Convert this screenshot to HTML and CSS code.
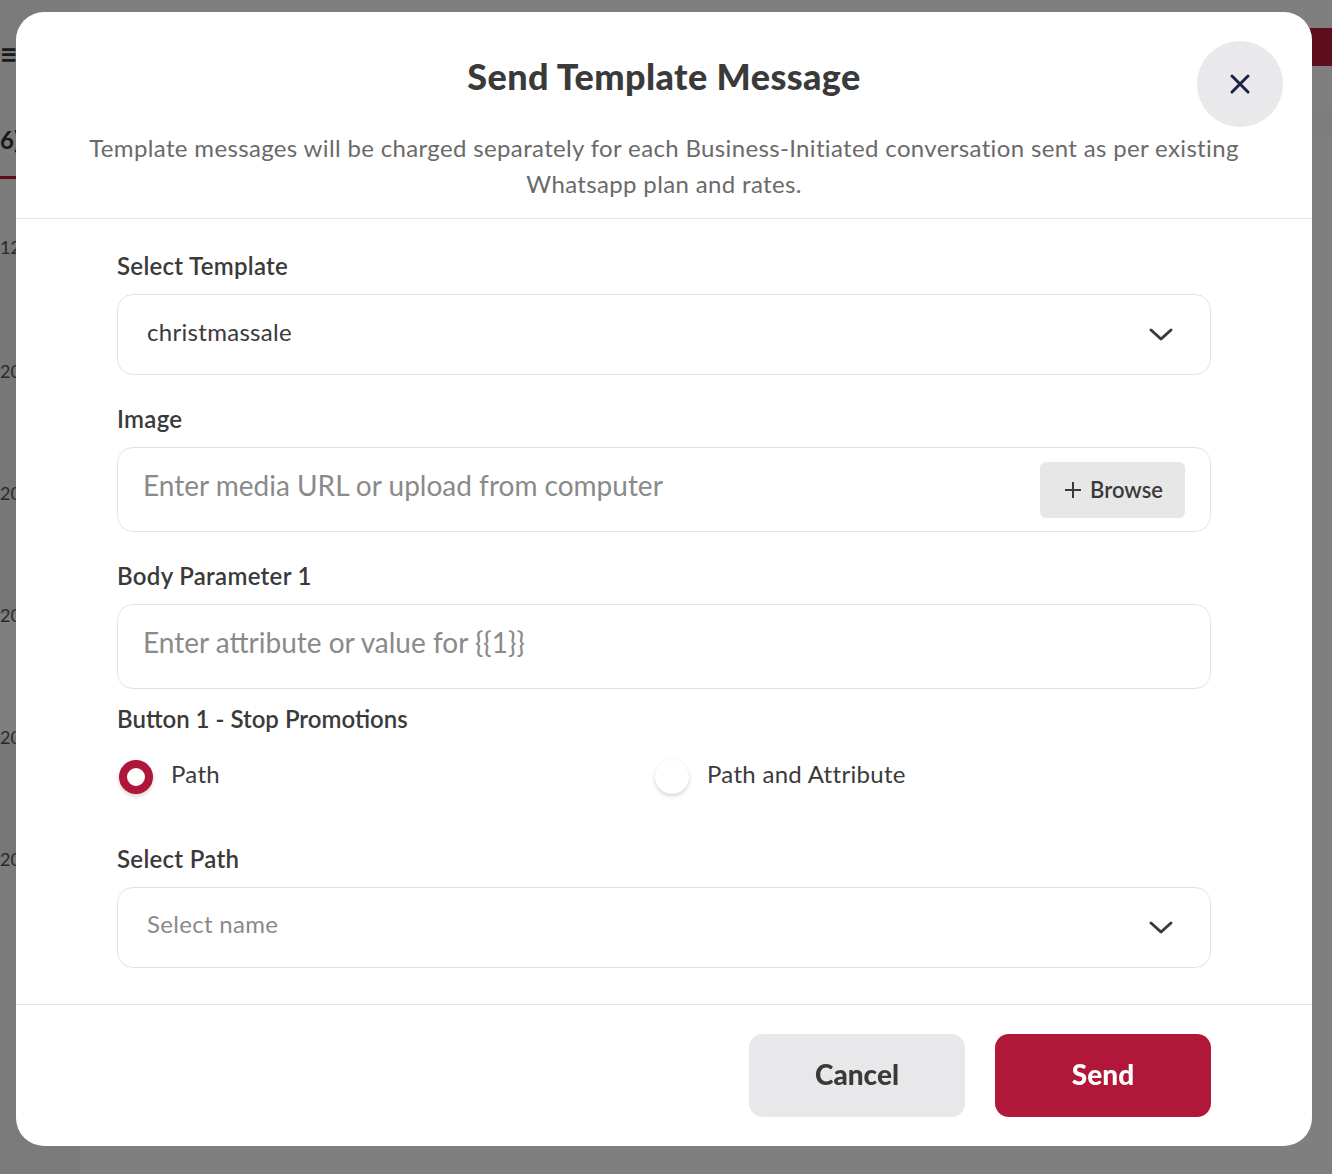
FILE: index.html
```html
<!DOCTYPE html>
<html lang="en">
<head>
  <meta charset="UTF-8">
  <title>Send Template Message</title>
  <link rel="stylesheet" href="styles.css">
</head>
<body>
  <div class="page">
    <div class="side">
      <div class="side-icon">&#8801;</div>
      <div class="side-count">6)</div>
      <div class="side-tab"></div>
      <div class="side-row first">12:</div>
      <div class="side-row">20</div>
      <div class="side-row">20</div>
      <div class="side-row">20</div>
      <div class="side-row light">20</div>
      <div class="side-row">20</div>
    </div>
    <div class="main">
      <div class="top-btn"></div>
      <div class="top-band"></div>
    </div>
  </div>

  <div class="overlay">
    <div class="modal">
      <div class="modal-head">
        <h1>Send Template Message</h1>
        <p>Template messages will be charged separately for each Business-Initiated conversation sent as per existing Whatsapp plan and rates.</p>
        <button class="close" aria-label="Close">
          <svg width="22" height="22" viewBox="0 0 22 22"><path d="M3 3L19 19M19 3L3 19" stroke="#1b2442" stroke-width="3" stroke-linecap="round"/></svg>
        </button>
      </div>

      <div class="modal-body">
        <label class="field-label">Select Template</label>
        <div class="select">
          <span class="value">christmassale</span>
          <svg width="26" height="16" viewBox="0 0 26 16"><path d="M3 3L13 12L23 3" fill="none" stroke="#3a3a3a" stroke-width="3" stroke-linecap="round" stroke-linejoin="round"/></svg>
        </div>

        <label class="field-label">Image</label>
        <div class="input">
          <span class="placeholder">Enter media URL or upload from computer</span>
          <button class="browse">
            <svg width="18" height="18" viewBox="0 0 18 18"><path d="M9 1V17M1 9H17" stroke="#3a3a3a" stroke-width="2"/></svg>
            Browse
          </button>
        </div>

        <label class="field-label">Body Parameter 1</label>
        <div class="input">
          <span class="placeholder">Enter attribute or value for {{1}}</span>
        </div>

        <label class="field-label tight">Button 1 - Stop Promotions</label>
        <div class="radios">
          <label class="radio"><span class="dot on"></span><span>Path</span></label>
          <label class="radio"><span class="dot"></span><span>Path and Attribute</span></label>
        </div>

        <label class="field-label">Select Path</label>
        <div class="select">
          <span class="value placeholder small">Select name</span>
          <svg width="26" height="16" viewBox="0 0 26 16"><path d="M3 3L13 12L23 3" fill="none" stroke="#3a3a3a" stroke-width="3" stroke-linecap="round" stroke-linejoin="round"/></svg>
        </div>
      </div>

      <div class="modal-foot">
        <button class="btn cancel">Cancel</button>
        <button class="btn send">Send</button>
      </div>
    </div>
  </div>
</body>
</html>
```

FILE: styles.css
```css
body {
  margin: 0;
  font-family: Lato, "Liberation Sans", sans-serif;
  background-color: #f4f4f4;
  color: #3a3a3a;
  overflow: hidden;
}
.page {
  display: flex;
  height: 1174px;
}
.side {
  width: 80px;
  background-color: #f6f6f6;
  font-size: 20px;
  color: #333;
  overflow: hidden;
}
.side-icon {
  height: 30px;
  margin-top: 38px;
  font-size: 30px;
  line-height: 30px;
  font-weight: 700;
}
.side-count {
  margin-top: 57px;
  font-weight: 700;
  font-size: 24px;
}
.side-tab {
  height: 3px;
  margin-top: 22px;
  background-color: #bc1a3c;
}
.side-row {
  height: 122px;
  line-height: 20px;
  font-size: 18px;
  color: #555;
  background-color: #eeeeee;
  box-sizing: border-box;
  padding-top: 113px;
}
.side-row.first {
  height: 69px;
  padding-top: 58px;
  background-color: #f6f6f6;
}
.side-row.light {
  background-color: #ffffff;
}
.main {
  flex: 1;
  background-color: #ffffff;
  display: flex;
  flex-direction: column;
  align-items: flex-end;
}
.top-btn {
  width: 80px;
  height: 38px;
  margin-top: 28px;
  background-color: #bc1a3c;
}
.top-band {
  width: 100%;
  height: 30px;
  margin-top: 40px;
  background-color: #fafafa;
}

.overlay {
  position: fixed;
  inset: 0;
  background-color: rgba(0, 0, 0, 0.5);
}
.modal {
  position: relative;
  margin: 12px 0 0 16px;
  width: 1296px;
  height: 1134px;
  background-color: #ffffff;
  border-radius: 28px;
  display: flex;
  flex-direction: column;
}
.modal-head {
  padding: 44px 50px 16px;
  text-align: center;
  border-bottom: 1px solid #e6e6e6;
}
.modal-head h1 {
  margin: 0;
  font-size: 36px;
  line-height: 40px;
  font-weight: 900;
  letter-spacing: 0.4px;
  color: #3a3a3a;
}
.modal-head p {
  margin: 34px 0 0;
  font-size: 24px;
  line-height: 36px;
  letter-spacing: 0.35px;
  color: #6a6a6a;
}
.close {
  position: absolute;
  top: 29px;
  right: 29px;
  width: 86px;
  height: 86px;
  border: none;
  border-radius: 50%;
  background-color: #e9e8ea;
  display: flex;
  align-items: center;
  justify-content: center;
  padding: 0;
}

.modal-body {
  flex: 1;
  padding: 31px 101px 0;
  display: flex;
  flex-direction: column;
}
.field-label {
  font-size: 24px;
  line-height: 32px;
  font-weight: 600;
  letter-spacing: 0.3px;
  color: #3a3a3a;
  margin-top: 28px;
  margin-bottom: 12px;
}
.field-label:first-child {
  margin-top: 0;
}
.field-label.tight {
  margin-top: 14px;
  letter-spacing: 0;
}
.select, .input {
  border: 1px solid #e3e3e3;
  border-radius: 16px;
  display: flex;
  align-items: center;
  justify-content: space-between;
  box-sizing: border-box;
}
.select {
  height: 81px;
  padding: 0 36px 0 29px;
  font-size: 24px;
}
.input {
  height: 85px;
  padding: 0 25px 0 25px;
}
.value {
  padding-bottom: 6px;
  letter-spacing: 0.3px;
}
.placeholder {
  font-size: 28px;
  color: #8a8a8a;
  padding-bottom: 9px;
}
.placeholder.small {
  font-size: 24px;
  padding-bottom: 8px;
}
.browse {
  display: flex;
  align-items: center;
  gap: 8px;
  height: 56px;
  padding: 0 22px 0 24px;
  border: none;
  border-radius: 6px;
  background-color: #e7e7e8;
  font-family: inherit;
  font-size: 22px;
  font-weight: 600;
  color: #3a3a3a;
}
.radios {
  display: grid;
  grid-template-columns: 536px 1fr;
  margin-top: 13px;
  margin-bottom: 21px;
}
.radio {
  display: flex;
  align-items: flex-start;
  gap: 18px;
  height: 34px;
  font-size: 24px;
  line-height: 28px;
  letter-spacing: 0.3px;
  color: #3a3a3a;
  padding-left: 2px;
}
.dot {
  width: 34px;
  height: 34px;
  border-radius: 50%;
  background-color: #ffffff;
  box-sizing: border-box;
  box-shadow: 0 2px 4px rgba(0, 0, 0, 0.18);
}
.dot.on {
  border: 8px solid #b0163a;
}

.modal-foot {
  margin-top: 36px;
  border-top: 1px solid #e6e6e6;
  padding: 29px 101px 29px;
  display: flex;
  justify-content: flex-end;
  gap: 30px;
}
.btn {
  width: 216px;
  height: 83px;
  border: none;
  border-radius: 14px;
  font-family: inherit;
  font-size: 28px;
  font-weight: 900;
  padding-bottom: 4px;
}
.cancel {
  background-color: #e8e7e9;
  color: #3a3a3a;
}
.send {
  background-color: #b01738;
  color: #ffffff;
}
```
